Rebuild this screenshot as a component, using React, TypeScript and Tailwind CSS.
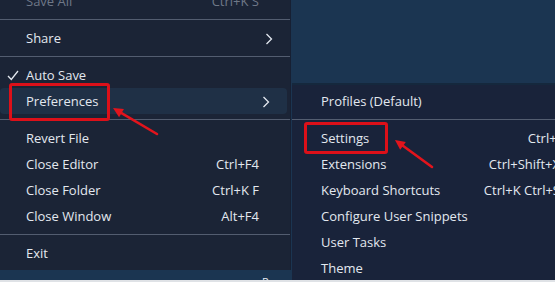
import React from 'react';

type RowProps = {
  label: string;
  keys?: string;
  sub?: boolean;
  checked?: boolean;
  active?: boolean;
  dim?: boolean;
};

const Chevron = () => (
  <svg width="8" height="12" viewBox="0 0 8 12" className="ml-[6px]">
    <path d="M1.5 1 L6.5 6 L1.5 11" fill="none" stroke="#e3e8ef" strokeWidth="1.3" />
  </svg>
);

const Check = () => (
  <svg width="12" height="11" viewBox="0 0 12 11" className="absolute left-[7px] top-[8px]">
    <path d="M1 6 L4.3 9.5 L11 1" fill="none" stroke="#e3e8ef" strokeWidth="1.3" />
  </svg>
);

const Row = ({ label, keys, sub, checked, active, dim }: RowProps) => (
  <div
    className={`relative flex items-center h-[26px] pt-[2px] pl-[26px] pr-[16px] ${
      active ? 'bg-[#1f3046] rounded-[4px] mr-[3px] pr-[13px]' : ''
    } ${dim ? 'text-[#6f7888]' : 'text-[#e3e8ef]'}`}
  >
    {checked && <Check />}
    <span className="flex-1 whitespace-nowrap">{label}</span>
    {keys && <span className="whitespace-nowrap">{keys}</span>}
    <div className="w-[15px] flex items-center">{sub && <Chevron />}</div>
  </div>
);

const SubRow = ({ label, keys }: { label: string; keys?: string }) => (
  <div className="flex items-center h-[26px] pt-[2px] pl-[29px] pr-[32px] text-[#e3e8ef]">
    <span className="flex-1 whitespace-nowrap">{label}</span>
    {keys && <span className="whitespace-nowrap">{keys}</span>}
  </div>
);

const Sep = () => (
  <div className="h-[11px] flex items-center">
    <div className="h-px w-full bg-[#535d70]" />
  </div>
);

const Arrow = ({ x1, y1, x2, y2 }: { x1: number; y1: number; x2: number; y2: number }) => {
  const a = Math.atan2(y2 - y1, x2 - x1);
  const l = 11;
  const w = 0.45;
  const p1 = `${x2 - l * Math.cos(a - w)},${y2 - l * Math.sin(a - w)}`;
  const p2 = `${x2 - l * Math.cos(a + w)},${y2 - l * Math.sin(a + w)}`;
  return (
    <g>
      <line x1={x1} y1={y1} x2={x2 - 6 * Math.cos(a)} y2={y2 - 6 * Math.sin(a)} stroke="#e3141c" strokeWidth="2.6" strokeLinecap="round" />
      <polygon points={`${x2},${y2} ${p1} ${p2}`} fill="#e3141c" />
    </g>
  );
};

export default function App() {
  return (
    <div className="relative w-[555px] h-[282px] overflow-hidden bg-[#1b3551] font-['Open_Sans','Noto_Sans',sans-serif] text-[13px]">
      <div className="w-[291px] h-full bg-[#1b2436] border-r border-[#172033]">
        <div className="-mt-[12px]">
          <Row label="Save All" keys="Ctrl+K S" dim />
          <Sep />
          <Row label="Share" sub />
          <Sep />
          <Row label="Auto Save" checked />
          <Row label="Preferences" sub active />
          <Sep />
          <Row label="Revert File" />
          <Row label="Close Editor" keys="Ctrl+F4" />
          <Row label="Close Folder" keys="Ctrl+K F" />
          <Row label="Close Window" keys="Alt+F4" />
          <Sep />
          <Row label="Exit" />
        </div>
      </div>

      <div className="absolute left-[292px] top-[83px] w-[300px] h-[210px] bg-[#19233a] border-t-2 border-[#15283d] pt-[3px]">
        <SubRow label="Profiles (Default)" />
        <Sep />
        <SubRow label="Settings" keys="Ctrl+," />
        <SubRow label="Extensions" keys="Ctrl+Shift+X" />
        <SubRow label="Keyboard Shortcuts" keys="Ctrl+K Ctrl+S" />
        <SubRow label="Configure User Snippets" />
        <SubRow label="User Tasks" />
        <SubRow label="Theme" />
      </div>

      <span className="absolute left-[262px] top-[274px] text-[11px] text-[#e3e8ef]">Proc:</span>
      <div className="absolute inset-x-0 bottom-0 h-[2px] bg-[#dfe2e6]" />

      <div className="absolute left-[9px] top-[83px] w-[101px] h-[38px] border-[3px] border-[#dc1019] rounded-[3px]" />
      <div className="absolute left-[304px] top-[122px] w-[84px] h-[32px] border-[3px] border-[#dc1019] rounded-[3px]" />

      <svg className="absolute left-0 top-0" width="555" height="282">
        <Arrow x1={157} y1={134} x2={113} y2={108} />
        <Arrow x1={432} y1={167} x2={395} y2={140} />
      </svg>
    </div>
  );
}
